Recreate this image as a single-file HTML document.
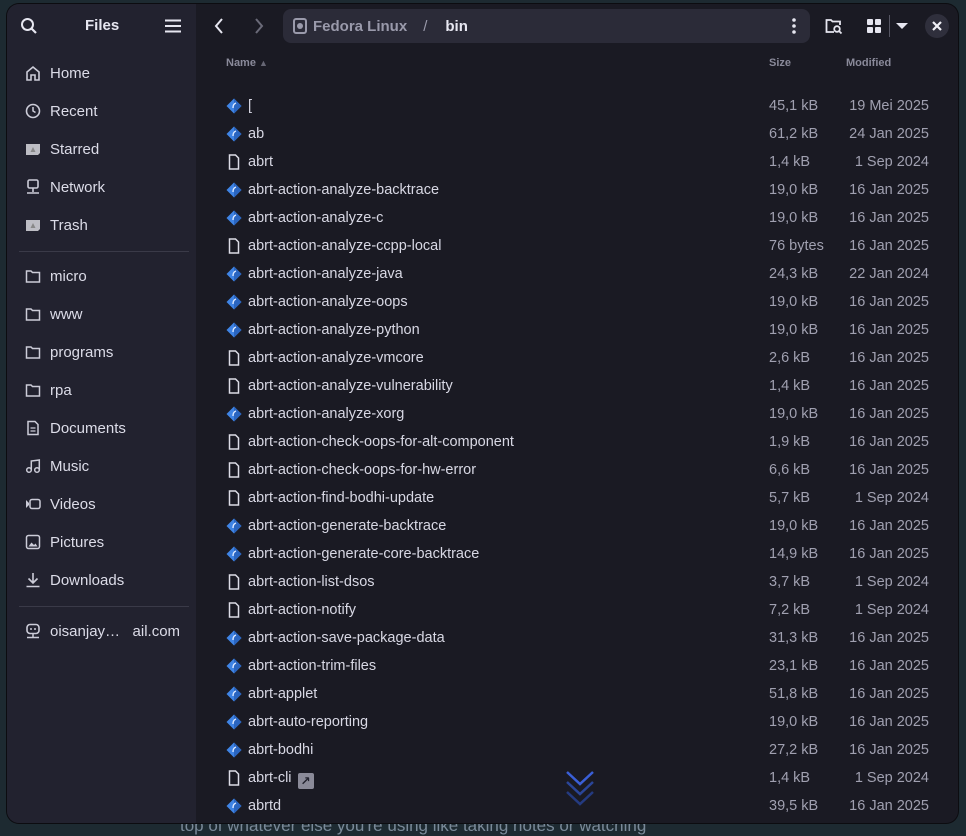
<!DOCTYPE html>
<html><head><meta charset="utf-8"><style>
*{margin:0;padding:0;box-sizing:border-box}
body{width:966px;height:834px;background:#1d2a31;font-family:"Liberation Sans","DejaVu Sans",sans-serif;overflow:hidden;position:relative}
.bgtext{position:absolute;left:180px;top:816px;color:#7a8a99;font-size:17px}
.win{position:absolute;left:7px;top:4px;width:951px;height:819px;border-radius:12px;overflow:hidden;background:#1a1a23;box-shadow:0 0 0 1px #0c0c10}
.side{position:absolute;left:0;top:0;width:189px;height:100%;background:#22222f}
.hdr{position:absolute;top:0;height:44px;color:#e6e6f0;font-weight:bold;font-size:15px}
.si{position:absolute;left:18px;height:24px;display:flex;align-items:center;color:#dcdce8;font-size:15px}
.si svg{width:16px;height:16px;margin-right:9px}
.sep{position:absolute;left:12px;width:170px;height:1px;background:#3a3a48}
.path{position:absolute;left:276px;top:5px;width:527px;height:34px;background:#2b2b38;border-radius:8px;color:#9a9aab;font-size:15px;font-weight:bold;display:flex;align-items:center}
.col{position:absolute;top:53px;color:#8a8a9a;font-size:11px;font-weight:bold}
.row{position:absolute;left:0;width:951px;height:28px;font-size:14.5px;color:#d8d8e4}
.row .ic{position:absolute;left:219px;top:5px}
.row .n{position:absolute;left:241px;top:5px}
.row .s{position:absolute;left:762px;top:5px;color:#a0a0b0}
.row .m{position:absolute;right:29px;top:5px;color:#a0a0b0}
</style></head><body>
<div class="bgtext">top of whatever else you're using like taking notes or watching</div>
<div class="win">
<div class="side">
 <svg style="position:absolute;left:13px;top:13px" width="18" height="18" viewBox="0 0 18 18"><circle cx="7.5" cy="7.5" r="5.5" fill="none" stroke="#e6e6f0" stroke-width="2"/><path d="M11.5 11.5L16 16" stroke="#e6e6f0" stroke-width="2.2"/></svg>
 <div class="hdr" style="left:78px;line-height:44px">Files</div>
 <svg style="position:absolute;left:158px;top:15px" width="16" height="14"><path d="M0 1.5H16M0 7H16M0 12.5H16" stroke="#e6e6f0" stroke-width="2"/></svg>
 <div class="si" style="top:57px"><svg viewBox="0 0 16 16"><path d="M2 15V7L8 2L14 7V15H10V10H6V15Z" fill="none" stroke="#ccccd8" stroke-width="1.6"/></svg>Home</div>
 <div class="si" style="top:95px"><svg viewBox="0 0 16 16"><circle cx="8" cy="8" r="6.5" fill="none" stroke="#ccccd8" stroke-width="1.6"/><path d="M8 4V8L10.5 9.5" fill="none" stroke="#ccccd8" stroke-width="1.5"/></svg>Recent</div>
 <div class="si" style="top:133px"><svg viewBox="0 0 16 16"><path d="M1 3H15V12L13 14H1Z" fill="#bdbdc4"/><path d="M8 6L10.5 11H5.5Z" fill="#888"/></svg>Starred</div>
 <div class="si" style="top:171px"><svg viewBox="0 0 16 16"><rect x="3" y="1" width="10" height="8" rx="1.5" fill="none" stroke="#ccccd8" stroke-width="1.6"/><path d="M8 9V13M2 14H14" stroke="#ccccd8" stroke-width="1.6"/></svg>Network</div>
 <div class="si" style="top:209px"><svg viewBox="0 0 16 16"><path d="M1 3H15V12L13 14H1Z" fill="#bdbdc4"/><path d="M8 6L10.5 11H5.5Z" fill="#888"/></svg>Trash</div>
 <div class="sep" style="top:247px"></div>
 <div class="si" style="top:260px"><svg viewBox="0 0 16 16"><path d="M1.5 3H6L7.5 4.5H14.5V14H1.5Z" fill="none" stroke="#ccccd8" stroke-width="1.5"/></svg>micro</div>
 <div class="si" style="top:298px"><svg viewBox="0 0 16 16"><path d="M1.5 3H6L7.5 4.5H14.5V14H1.5Z" fill="none" stroke="#ccccd8" stroke-width="1.5"/></svg>www</div>
 <div class="si" style="top:336px"><svg viewBox="0 0 16 16"><path d="M1.5 3H6L7.5 4.5H14.5V14H1.5Z" fill="none" stroke="#ccccd8" stroke-width="1.5"/></svg>programs</div>
 <div class="si" style="top:374px"><svg viewBox="0 0 16 16"><path d="M1.5 3H6L7.5 4.5H14.5V14H1.5Z" fill="none" stroke="#ccccd8" stroke-width="1.5"/></svg>rpa</div>
 <div class="si" style="top:412px"><svg viewBox="0 0 16 16"><path d="M3 1.5H10L13 4.5V14.5H3Z" fill="none" stroke="#ccccd8" stroke-width="1.5"/><path d="M5.5 8H10.5M5.5 11H10.5" stroke="#ccccd8" stroke-width="1.3"/></svg>Documents</div>
 <div class="si" style="top:450px"><svg viewBox="0 0 16 16"><circle cx="4" cy="12" r="2.3" fill="none" stroke="#ccccd8" stroke-width="1.5"/><circle cx="12" cy="12" r="2.3" fill="none" stroke="#ccccd8" stroke-width="1.5"/><path d="M6.3 12V3L14.3 2V12" fill="none" stroke="#ccccd8" stroke-width="1.5"/></svg>Music</div>
 <div class="si" style="top:488px"><svg viewBox="0 0 16 16"><path d="M1 4V12L4 9V7Z" fill="#ccccd8"/><rect x="5" y="3.5" width="10" height="9" rx="2" fill="none" stroke="#ccccd8" stroke-width="1.5"/></svg>Videos</div>
 <div class="si" style="top:526px"><svg viewBox="0 0 16 16"><rect x="1.5" y="1.5" width="13" height="13" rx="2" fill="none" stroke="#ccccd8" stroke-width="1.5"/><path d="M3.5 12.5L6.5 8.5L9 11L10.5 9.5L12.5 12.5Z" fill="#ccccd8"/></svg>Pictures</div>
 <div class="si" style="top:564px"><svg viewBox="0 0 16 16"><path d="M8 1V11M3.5 6.5L8 11L12.5 6.5M1.5 14.5H14.5" fill="none" stroke="#ccccd8" stroke-width="1.6"/></svg>Downloads</div>
 <div class="sep" style="top:602px"></div>
 <div class="si" style="top:615px"><svg viewBox="0 0 16 16"><rect x="2" y="1.5" width="12" height="9" rx="3" fill="none" stroke="#ccccd8" stroke-width="1.6"/><path d="M8 10.5V14M2 14.5H14" stroke="#ccccd8" stroke-width="1.5"/><circle cx="6" cy="6" r="1" fill="#ccccd8"/><circle cx="10" cy="6" r="1" fill="#ccccd8"/></svg>oisanjay…&nbsp;&nbsp;&nbsp;ail.com</div>
</div>
<svg style="position:absolute;left:207px;top:13px" width="10" height="18"><path d="M8 2L2 9L8 16" fill="none" stroke="#e6e6f0" stroke-width="2"/></svg>
<svg style="position:absolute;left:247px;top:13px" width="10" height="18"><path d="M2 2L8 9L2 16" fill="none" stroke="#6a6a78" stroke-width="2"/></svg>
<div class="path"><svg style="margin:0 6px 0 10px" width="14" height="16" viewBox="0 0 14 16"><rect x="1" y="1" width="12" height="14" rx="2" fill="none" stroke="#9a9aab" stroke-width="2"/><circle cx="7" cy="8" r="3" fill="#9a9aab"/></svg>Fedora Linux<span style="margin:0 18px 0 16px;font-weight:normal">/</span><span style="color:#e8e8f2">bin</span>
<svg style="position:absolute;right:14px;top:9px" width="4" height="16"><circle cx="2" cy="2" r="1.8" fill="#e6e6f0"/><circle cx="2" cy="8" r="1.8" fill="#e6e6f0"/><circle cx="2" cy="14" r="1.8" fill="#e6e6f0"/></svg></div>
<svg style="position:absolute;left:818px;top:14px" width="18" height="17" viewBox="0 0 18 17"><path d="M9 14H1.5V2H6L7.5 3.5H15V7" fill="none" stroke="#e6e6f0" stroke-width="1.8"/><circle cx="12" cy="11" r="2.8" fill="none" stroke="#e6e6f0" stroke-width="1.8"/><path d="M14 13L16.5 15.5" stroke="#e6e6f0" stroke-width="1.8"/></svg>
<svg style="position:absolute;left:860px;top:15px" width="14" height="14"><rect x="0" y="0" width="6" height="6" rx="1" fill="#e6e6f0"/><rect x="8" y="0" width="6" height="6" rx="1" fill="#e6e6f0"/><rect x="0" y="8" width="6" height="6" rx="1" fill="#e6e6f0"/><rect x="8" y="8" width="6" height="6" rx="1" fill="#e6e6f0"/></svg>
<div style="position:absolute;left:882px;top:11px;width:1px;height:22px;background:#555562"></div>
<svg style="position:absolute;left:889px;top:19px" width="12" height="7"><path d="M0 0H12L6 6Z" fill="#e6e6f0"/></svg>
<div style="position:absolute;left:918px;top:10px;width:24px;height:24px;border-radius:50%;background:#2f2f3c"></div>
<svg style="position:absolute;left:925px;top:17px" width="10" height="10"><path d="M1 1L9 9M9 1L1 9" stroke="#f0f0f6" stroke-width="2.2"/></svg>
<div class="col" style="left:219px">Name <span style="font-size:9px;color:#666674">▲</span></div>
<div class="col" style="left:762px">Size</div>
<div class="col" style="left:839px">Modified</div>
<div id="rows"></div>
<svg style="position:absolute;left:558px;top:766px" width="30" height="40" viewBox="0 0 30 40"><path d="M2 2L15 14L28 2" fill="none" stroke="#3a5fd8" stroke-width="2.5"/><path d="M2 12L15 24L28 12" fill="none" stroke="#2a4599" stroke-width="2.5"/><path d="M2 22L15 34L28 22" fill="none" stroke="#243a80" stroke-width="2.5"/></svg>
</div>
<script>
var d=[["[","45,1 kB","19 Mei 2025",1],["ab","61,2 kB","24 Jan 2025",1],["abrt","1,4 kB","1 Sep 2024",0],["abrt-action-analyze-backtrace","19,0 kB","16 Jan 2025",1],["abrt-action-analyze-c","19,0 kB","16 Jan 2025",1],["abrt-action-analyze-ccpp-local","76 bytes","16 Jan 2025",0],["abrt-action-analyze-java","24,3 kB","22 Jan 2024",1],["abrt-action-analyze-oops","19,0 kB","16 Jan 2025",1],["abrt-action-analyze-python","19,0 kB","16 Jan 2025",1],["abrt-action-analyze-vmcore","2,6 kB","16 Jan 2025",0],["abrt-action-analyze-vulnerability","1,4 kB","16 Jan 2025",0],["abrt-action-analyze-xorg","19,0 kB","16 Jan 2025",1],["abrt-action-check-oops-for-alt-component","1,9 kB","16 Jan 2025",0],["abrt-action-check-oops-for-hw-error","6,6 kB","16 Jan 2025",0],["abrt-action-find-bodhi-update","5,7 kB","1 Sep 2024",0],["abrt-action-generate-backtrace","19,0 kB","16 Jan 2025",1],["abrt-action-generate-core-backtrace","14,9 kB","16 Jan 2025",1],["abrt-action-list-dsos","3,7 kB","1 Sep 2024",0],["abrt-action-notify","7,2 kB","1 Sep 2024",0],["abrt-action-save-package-data","31,3 kB","16 Jan 2025",1],["abrt-action-trim-files","23,1 kB","16 Jan 2025",1],["abrt-applet","51,8 kB","16 Jan 2025",1],["abrt-auto-reporting","19,0 kB","16 Jan 2025",1],["abrt-bodhi","27,2 kB","16 Jan 2025",1],["abrt-cli","1,4 kB","1 Sep 2024",2],["abrtd","39,5 kB","16 Jan 2025",1]];
var h="";d.forEach(function(r,i){var ic=r[3]==1?'<svg class="ic" width="16" height="16" viewBox="0 0 16 16"><path d="M8 0.5L15.5 8L8 15.5L0.5 8Z" fill="#3f84e5"/><path d="M8 0.5L15.5 8L8 15.5Z" fill="#2a65c0"/><path d="M10 5Q7 6 7 10" fill="none" stroke="#dbe8ff" stroke-width="1.4"/></svg>':'<svg class="ic" width="16" height="16" viewBox="0 0 16 16"><path d="M3.5 1H9.5L12.5 4V15H3.5Z" fill="none" stroke="#dcdce6" stroke-width="1.5"/></svg>';
var ex=r[3]==2?'<span style="display:inline-block;width:16px;height:16px;background:#8a8a98;border-radius:2px;margin-left:6px;vertical-align:-3px;color:#22222e;font-size:12px;line-height:16px;text-align:center;font-weight:bold">↗</span>':'';
h+='<div class="row" style="top:'+(89+i*28)+'px">'+ic+'<div class="n">'+r[0]+ex+'</div><div class="s">'+r[1]+'</div><div class="m">'+r[2]+'</div></div>';});
document.getElementById("rows").innerHTML=h;
</script>
</body></html>
